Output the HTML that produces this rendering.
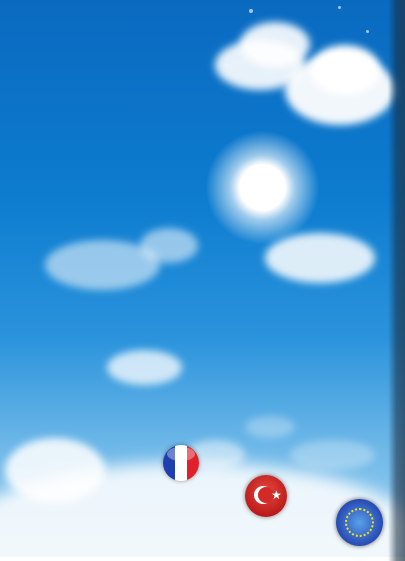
<!DOCTYPE html>
<html><head><style>
html,body{margin:0;overflow:hidden;width:405px;height:561px}
#p{position:relative;width:405px;height:561px;overflow:hidden;background:linear-gradient(#0a6ac0 0%,#0d7ccf 35%,#2a93dc 60%,#6fb8e8 80%,#a9d6f2 100%)}
.c{position:absolute;border-radius:50%;background:#fff;filter:blur(4px)}
.f{position:absolute;border-radius:50%}
</style></head><body><div id="p">
<div class="c" style="left:215px;top:40px;width:90px;height:50px;opacity:.9"></div>
<div class="c" style="left:240px;top:22px;width:70px;height:45px;opacity:.9"></div>
<div class="c" style="left:285px;top:55px;width:110px;height:70px;opacity:.95"></div>
<div class="c" style="left:310px;top:45px;width:70px;height:50px"></div>
<div class="f" style="left:205px;top:130px;width:115px;height:115px;background:radial-gradient(#fff 0%,#fff 28%,rgba(255,255,255,.6) 40%,rgba(255,255,255,0) 70%)"></div>
<div class="c" style="left:45px;top:240px;width:115px;height:50px;opacity:.55"></div>
<div class="c" style="left:140px;top:228px;width:58px;height:35px;opacity:.55"></div>
<div class="c" style="left:265px;top:233px;width:110px;height:50px;opacity:.85"></div>
<div class="c" style="left:107px;top:350px;width:75px;height:35px;opacity:.75"></div>
<div class="c" style="left:245px;top:416px;width:50px;height:22px;opacity:.3"></div>
<div class="c" style="left:290px;top:440px;width:85px;height:30px;opacity:.3"></div>
<div class="c" style="left:5px;top:438px;width:100px;height:65px;opacity:.85"></div>
<div class="c" style="left:-40px;top:462px;width:460px;height:150px;opacity:.85;filter:blur(8px)"></div>
<div class="c" style="left:185px;top:440px;width:60px;height:30px;opacity:.5"></div>
<div style="position:absolute;left:0;top:557px;width:405px;height:4px;background:#fff"></div>
<div style="position:absolute;left:388px;top:0;width:17px;height:561px;background:linear-gradient(90deg,rgba(0,0,0,0),rgba(20,40,60,.55) 50%,rgba(30,50,70,.7))"></div>
<div class="f" style="left:163px;top:445px;width:36px;height:36px;overflow:hidden;background:linear-gradient(90deg,#1f3fb0 33%,#fff 33%,#fff 66%,#e0202a 66%);box-shadow:0 0 4px rgba(0,0,0,.4)"><div style="position:absolute;left:4px;top:2px;width:28px;height:14px;border-radius:50%;background:rgba(255,255,255,.35)"></div></div>
<div class="f" style="left:245px;top:475px;width:42px;height:42px;background:radial-gradient(circle at 50% 40%,#e84a40,#b81818 75%,#7a0c0c);box-shadow:0 0 5px rgba(0,0,0,.5)">
<div class="f" style="left:9px;top:11px;width:18px;height:18px;background:#fff"></div>
<div class="f" style="left:13px;top:12px;width:16px;height:16px;background:#d22a26"></div>
<div style="position:absolute;left:26px;top:13px;color:#fff;font:12px 'DejaVu Sans',sans-serif">★</div></div>
<div class="f" style="left:336px;top:499px;width:47px;height:47px;background:radial-gradient(circle at 50% 50%,#5aa0e8,#2a50b8 65%,#14286a);box-shadow:0 0 5px rgba(0,0,0,.6)">
<div class="f" style="left:9px;top:9px;width:29px;height:29px;border:2px dotted #f0e020;box-sizing:border-box"></div></div>
<div class="f" style="left:249px;top:9px;width:4px;height:4px;background:#9cc8ee"></div>
<div class="f" style="left:338px;top:6px;width:3px;height:3px;background:#9cc8ee"></div>
<div class="f" style="left:366px;top:30px;width:3px;height:3px;background:#9cc8ee"></div>
</div></body></html>
